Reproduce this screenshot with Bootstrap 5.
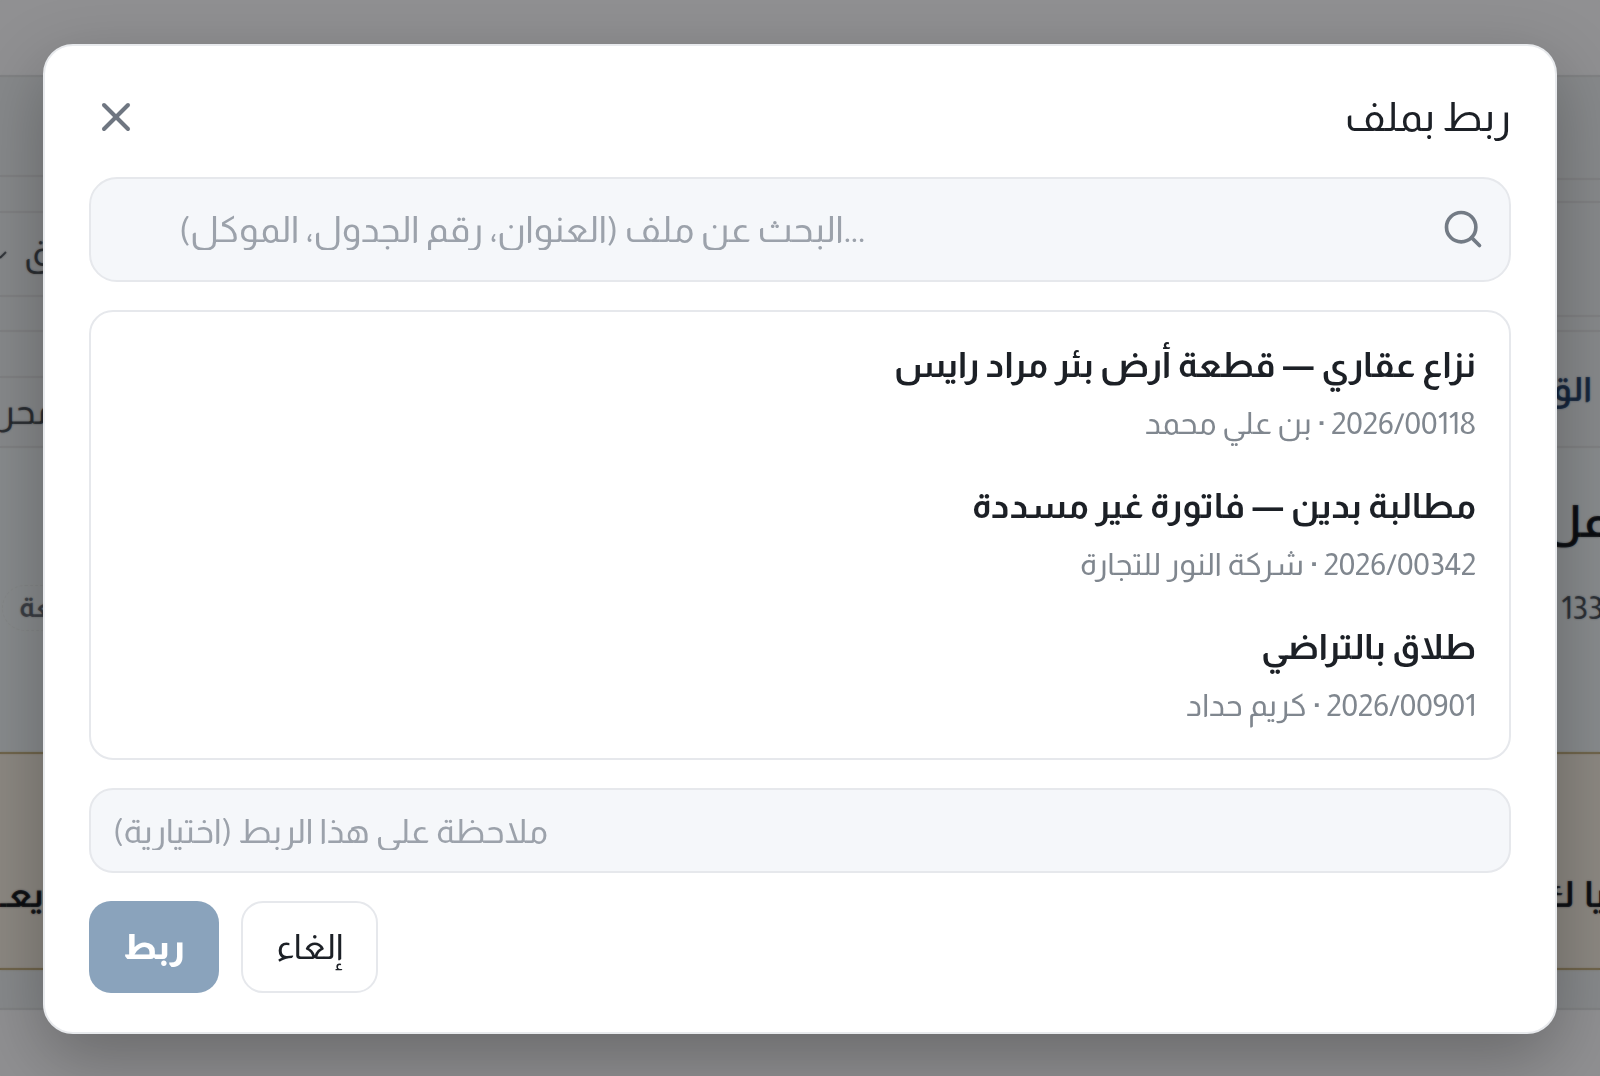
<!doctype html>
<html lang="ar" dir="rtl">
<head>
<meta charset="utf-8">
<title>ربط بملف</title>
<link href="https://cdn.jsdelivr.net/npm/bootstrap@5.3.0/dist/css/bootstrap.min.css" rel="stylesheet">
<style>
html,body{height:100%;overflow:hidden}
body{background:#f8f9fb;font-family:"Almarai","Noto Sans",sans-serif;color:#1c2026}
.page-strips{height:1076px;direction:ltr}
.strip{width:90px;flex:none}
.band{border-bottom:2px solid #d9dcdf;background:#e9edf0;overflow:hidden}
.band-top{height:77px;background:#f8f9fb}
.h-100px{height:100px}.h-36px{height:36px}.h-84px{height:84px}.h-35px{height:35px}.h-46px{height:46px}.h-70px{height:70px}
.h-103px{height:103px}.h-23px{height:23px}.h-114px{height:114px}.h-15px{height:15px}.h-116px{height:116px}
.band-main{height:304px;background:#ebf0f3;border-bottom:0}
.band-tan{height:218px;background:#f2eae0;border-top:2px solid #b9a36f;border-bottom:2px solid #b9a36f}
.band-40{height:40px;background:#e9edf0}
.band-end{height:66px;background:#f8f9fb;border-bottom:0}
.frag{white-space:nowrap;font-size:36px;line-height:1}
.frag-muted{color:#3a4048}
.frag-navy{color:#1f3c63;font-weight:700;font-size:34px;width:100%;text-align:right;padding-right:8px}
.frag-big{color:#12161c;font-weight:700;font-size:44px;text-align:right;margin:52px -8px 0 0}
.frag-num{color:#3c444e;font-size:32px;padding-left:51px;margin-top:48px}
.frag-bold{color:#12161c;font-weight:700;font-size:36px;margin-top:123px}
.frag-bold-r{text-align:right;margin-right:-6px;word-spacing:3px}
.chip-ghost{width:110px;height:46px;margin:137px 0 0 2px;border:1px dashed #dfe2e5;border-radius:999px;padding-left:16px;color:#5a616b;font-size:28px;font-weight:700;display:flex;align-items:center}
.chev{width:9px;height:18px;margin-right:15px;stroke:#3c434c}
.modal-backdrop.show{opacity:.42;backdrop-filter:blur(1px)}
.modal-dialog.link-dialog{max-width:1514px;margin:44px auto 0}
.link-dialog .modal-content{height:990px;border:2px solid #e8eaed;border-radius:30px;box-shadow:0 24px 70px rgba(0,0,0,.28);background:#fff}
.link-dialog .modal-header{padding:45px 44px 34px;border:0}
.link-dialog .modal-title{font-size:40.8px;line-height:52px;font-weight:400;color:#1c2026}
.x-btn{width:54px;height:52px;border:0;background:none;padding:0;color:#6f7681;display:flex;align-items:center;justify-content:center}
.link-dialog .modal-body{padding:0 44px;flex:none}
.search-wrap{margin-bottom:28px}
.soft-input.form-control{background:#f5f7fa;border:2px solid #e6e8ec;color:#1c2026;box-shadow:none}
.soft-input.form-control::placeholder{color:#9ca2ab}
.search-input.form-control{height:105px;border-radius:28px;padding:0 88px;font-size:36.3px}
.note-input.form-control{height:85px;border-radius:24px;padding:0 22px;font-size:33.8px}
.search-ico{position:absolute;top:30px;right:26px;width:44px;height:44px;color:#737b85}
.file-list{height:450px;border:2px solid #e6e8ec;border-radius:24px;padding:10px 0 0;margin-bottom:28px;overflow:hidden}
.file-list .list-group-item{border:0;padding:18px 33px 17px;background:none}
.file-name{font-size:35.2px;font-weight:700;line-height:50px;color:#1c2026}
.file-sub{font-size:31.1px;font-weight:400;line-height:44px;margin-top:12px;color:#80878f}
.link-dialog .modal-footer{padding:28px 44px 38px;border:0;justify-content:flex-end;gap:22px;flex-wrap:nowrap}
.link-dialog .modal-footer>.btn{margin:0;height:92px;font-size:35.5px;padding:0 30px;line-height:1}
.link-dialog .modal-footer>.btn.btn-link-file{font-size:34.8px}
.btn.btn-link-file,.btn.btn-link-file:disabled{background:#8aa3bc;border:0;color:#fff;font-weight:800;border-radius:22px;opacity:1;width:130px}
.btn.btn-cancel{background:#fff;border:2px solid #e6e8ec;color:#1c2026;border-radius:22px;width:137px}
</style>
</head>
<body>
<div class="page-strips d-flex justify-content-between">
  <div class="strip d-flex flex-column">
    <div class="band band-top"></div>
    <div class="band h-100px"></div>
    <div class="band h-36px"></div>
    <div class="band h-84px d-flex align-items-center"><svg class="chev" viewBox="0 0 9 18" fill="none" stroke-width="2" aria-hidden="true"><path d="M0 13 6 7"/></svg><span class="frag frag-muted">ق</span></div>
    <div class="band h-35px"></div>
    <div class="band h-46px"></div>
    <div class="band h-70px d-flex align-items-center"><span class="frag frag-muted">محر</span></div>
    <div class="band band-main"><div class="chip-ghost">ـعة</div></div>
    <div class="band band-tan"><div class="frag frag-bold">يعـ</div></div>
    <div class="band band-40"></div>
    <div class="band band-end"></div>
  </div>
  <div class="strip d-flex flex-column">
    <div class="band band-top"></div>
    <div class="band h-103px"></div>
    <div class="band h-23px"></div>
    <div class="band h-114px"></div>
    <div class="band h-15px"></div>
    <div class="band h-116px d-flex align-items-center"><span class="frag frag-navy">الق</span></div>
    <div class="band band-main"><div class="frag frag-big">عل</div><div class="frag frag-num">1337</div></div>
    <div class="band band-tan"><div class="frag frag-bold frag-bold-r">يا ك</div></div>
    <div class="band band-40"></div>
    <div class="band band-end"></div>
  </div>
</div>

<div class="modal-backdrop show"></div>
<div class="modal d-block" tabindex="-1">
  <div class="modal-dialog link-dialog">
    <div class="modal-content">
      <div class="modal-header">
        <h5 class="modal-title">ربط بملف</h5>
        <button type="button" class="x-btn" aria-label="إغلاق">
          <svg width="48" height="48" viewBox="0 0 24 24" fill="none" stroke="currentColor" stroke-width="2" stroke-linecap="round" stroke-linejoin="round" aria-hidden="true"><path d="M18 6 6 18"/><path d="m6 6 12 12"/></svg>
        </button>
      </div>
      <div class="modal-body">
        <div class="search-wrap position-relative">
          <input class="form-control soft-input search-input" dir="ltr" type="text" placeholder="البحث عن ملف (العنوان، رقم الجدول، الموكل)...">
          <svg class="search-ico" viewBox="0 0 24 24" fill="none" stroke="currentColor" stroke-width="2" stroke-linecap="round" stroke-linejoin="round" aria-hidden="true"><circle cx="11" cy="11" r="8"/><path d="m21 21-4.3-4.3"/></svg>
        </div>
        <div class="file-list list-group">
          <div class="list-group-item">
            <div class="file-name">نزاع عقاري — قطعة أرض بئر مراد رايس</div>
            <div class="file-sub">2026/00118 · بن علي محمد</div>
          </div>
          <div class="list-group-item">
            <div class="file-name">مطالبة بدين — فاتورة غير مسددة</div>
            <div class="file-sub">2026/00342 · شركة النور للتجارة</div>
          </div>
          <div class="list-group-item">
            <div class="file-name">طلاق بالتراضي</div>
            <div class="file-sub">2026/00901 · كريم حداد</div>
          </div>
        </div>
        <input class="form-control soft-input note-input" dir="ltr" type="text" placeholder="ملاحظة على هذا الربط (اختيارية)">
      </div>
      <div class="modal-footer">
        <button type="button" class="btn btn-cancel">إلغاء</button>
        <button type="button" class="btn btn-link-file" disabled>ربط</button>
      </div>
    </div>
  </div>
</div>
<script src="https://cdn.jsdelivr.net/npm/bootstrap@5.3.0/dist/js/bootstrap.bundle.min.js"></script>
</body>
</html>
